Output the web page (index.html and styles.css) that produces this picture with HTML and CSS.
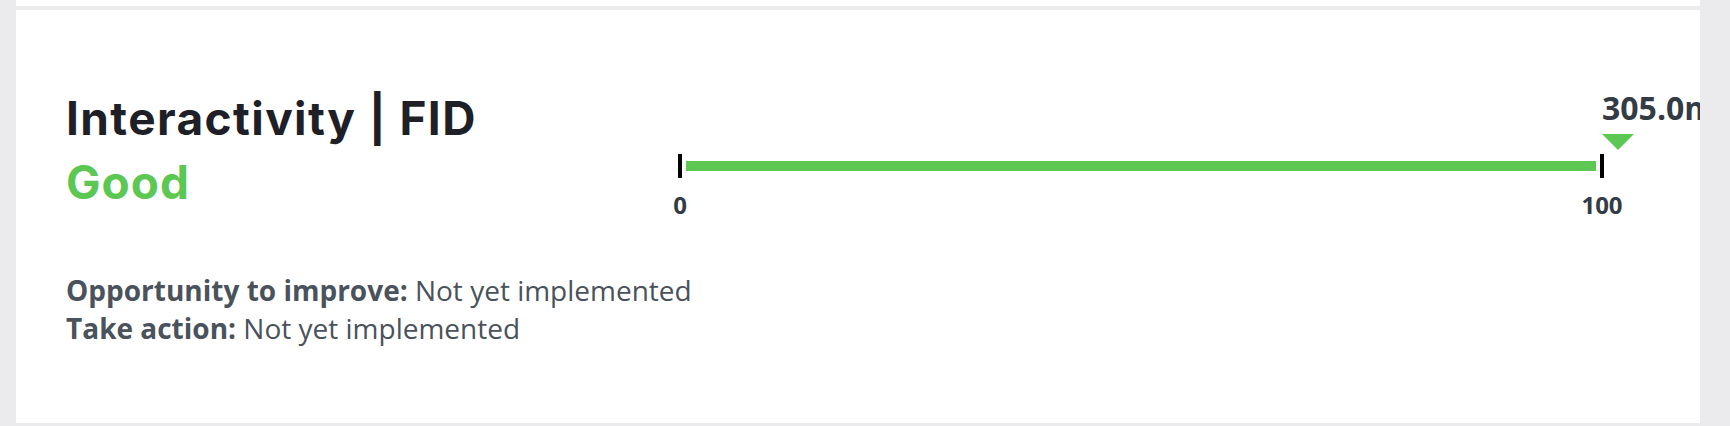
FILE: index.html
```
<!DOCTYPE html>
<html lang="en">
<head>
    <meta charset="UTF-8">
    <meta name="viewport" content="width=device-width, initial-scale=1.0">
    <title>Core Web Vitals</title>
    <link rel="stylesheet" href="styles.css">
</head>
<body>
    <div class="report">
        <!-- end of the previous metric card -->
        <div class="card card-prev"></div>

        <!-- FID card -->
        <div class="card metric">
            <div class="metric-top">
                <div class="metric-summary">
                    <h2 class="metric-title">Interactivity | FID</h2>
                    <div class="metric-status good">Good</div>
                </div>

                <div class="gauge">
                    <div class="gauge-track">
                        <span class="tick"></span>
                        <span class="bar good-bg"></span>
                        <span class="tick"></span>
                        <div class="marker" style="left: calc(100% - 2px);">
                            <span class="marker-value">305.0ms</span>
                            <span class="marker-arrow"></span>
                        </div>
                    </div>
                    <div class="gauge-labels">
                        <span class="gauge-label">0</span>
                        <span class="gauge-label">100</span>
                    </div>
                </div>
            </div>

            <div class="metric-notes">
                <p><strong>Opportunity to improve:</strong> Not yet implemented</p>
                <p><strong>Take action:</strong> Not yet implemented</p>
            </div>
        </div>
    </div>
</body>
</html>
```

FILE: styles.css
```
:root {
    --page-bg: #ebebee;
    --card-bg: #ffffff;
    --title-color: #1f1f27;
    --good-color: #5cc853;
    --text-color: #4a525c;
    --label-color: #333b45;
    --tick-color: #000000;
}

* {
    margin: 0;
    padding: 0;
    box-sizing: border-box;
}

body {
    background-color: var(--page-bg);
    font-family: 'Open Sans', 'Noto Sans', sans-serif;
    color: var(--text-color);
    overflow: hidden;
}

.report {
    display: flex;
    flex-direction: column;
    gap: 4px;
    padding: 0 30px 0 16px;
}

.card {
    background: var(--card-bg);
    overflow: hidden;
}

.card-prev {
    height: 6px;
}

.metric {
    padding: 81px 50px 76px 50px;
}

.metric-top {
    display: flex;
}

.metric-summary {
    width: 612px;
    flex-shrink: 0;
}

.metric-title {
    font-family: 'Inter', 'Roboto', sans-serif;
    font-size: 46px;
    font-weight: 700;
    line-height: 1.2;
    letter-spacing: 1.4px;
    color: var(--title-color);
}

.metric-status {
    font-family: 'Inter', 'Roboto', sans-serif;
    font-size: 46px;
    font-weight: 700;
    line-height: 1.2;
    letter-spacing: 1px;
    margin-top: 9px;
}

.good {
    color: var(--good-color);
}

.good-bg {
    background: var(--good-color);
}

.gauge {
    width: 926px;
    padding-top: 63px;
}

.gauge-track {
    position: relative;
    display: flex;
    align-items: center;
    height: 24px;
}

.tick {
    width: 4px;
    height: 24px;
    background: var(--tick-color);
}

.bar {
    flex: 1;
    height: 10px;
    margin: 0 4px;
}

.marker {
    position: absolute;
    bottom: calc(100% + 4px);
    display: flex;
    flex-direction: column;
    align-items: flex-start;
}

.marker-value {
    font-size: 32px;
    font-weight: 700;
    line-height: 1.2;
    color: var(--label-color);
    white-space: nowrap;
    margin-bottom: 7px;
}

.marker-arrow {
    width: 0;
    height: 0;
    border-left: 16px solid transparent;
    border-right: 16px solid transparent;
    border-top: 16px solid var(--good-color);
}

.gauge-labels {
    display: flex;
    justify-content: space-between;
    margin-top: 11px;
}

.gauge-label {
    width: 4px;
    display: flex;
    justify-content: center;
    font-size: 24px;
    font-weight: 700;
    line-height: 1.3;
    color: var(--label-color);
}

.metric-notes {
    margin-top: 51px;
    font-size: 28px;
    line-height: 38px;
}

.metric-notes strong {
    font-weight: 700;
}
```
